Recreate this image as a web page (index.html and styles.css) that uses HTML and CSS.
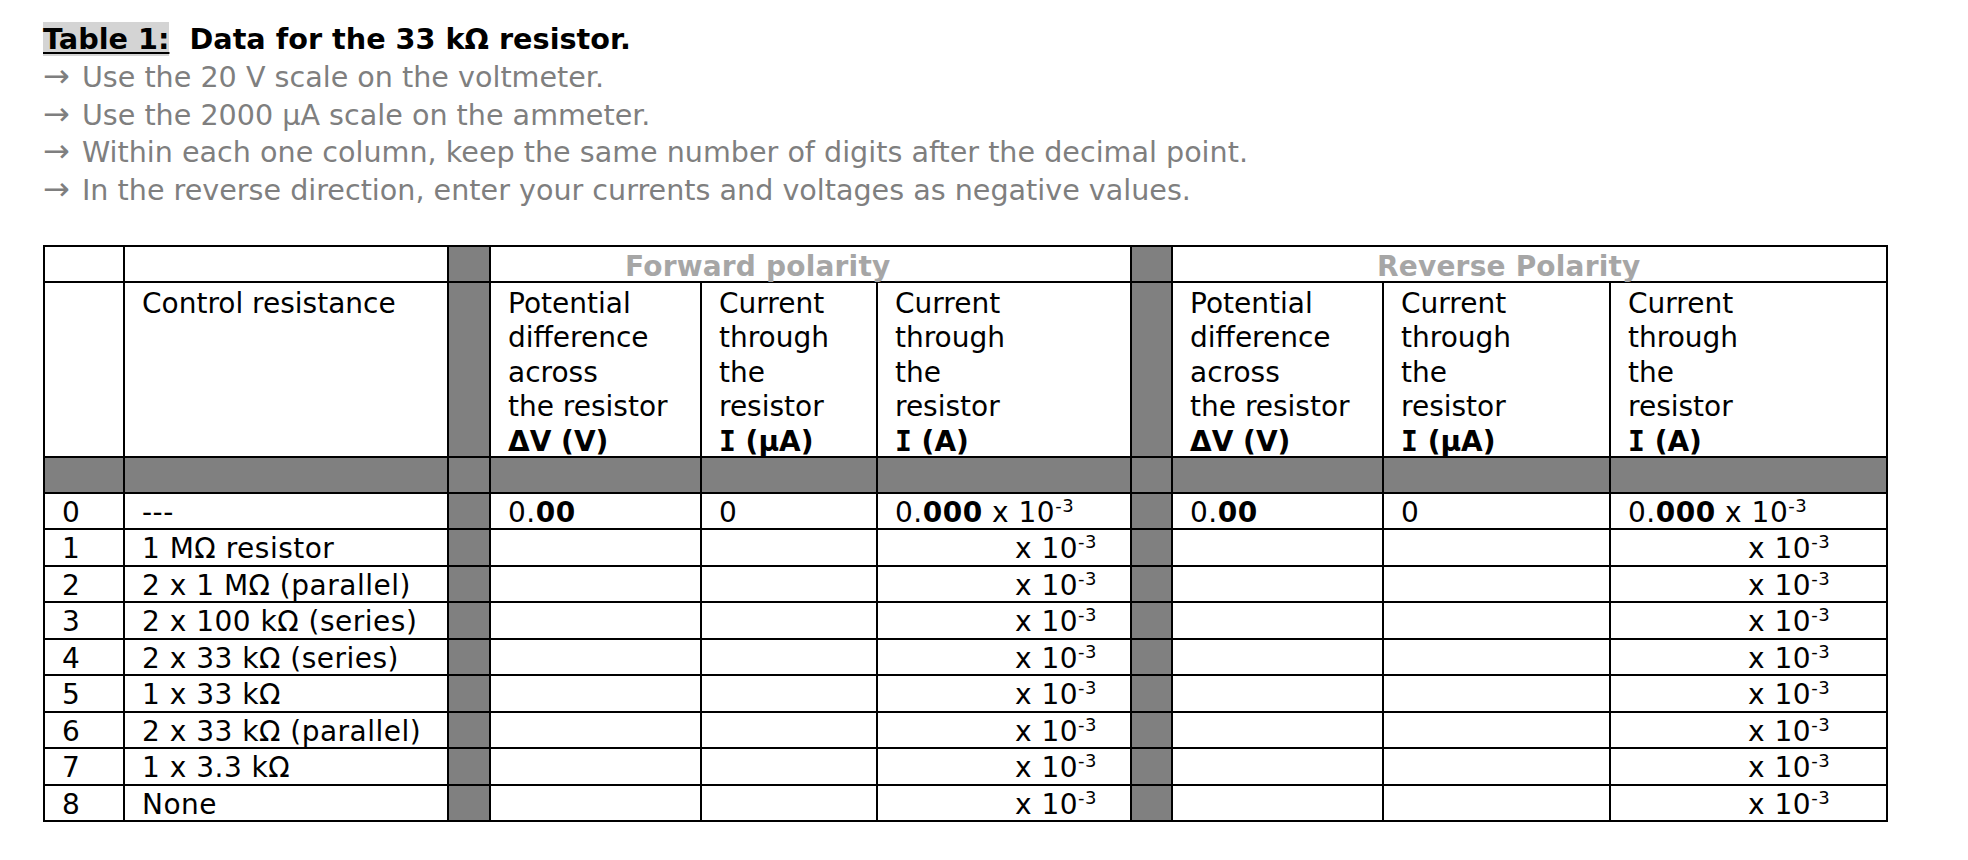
FILE: index.html
```html
<!DOCTYPE html>
<html>
<head>
<meta charset="utf-8">
<link rel="stylesheet" href="styles.css">
</head>
<body>
<div class="page">
  <div class="title"><span class="label">Table 1:</span>  Data for the 33 kΩ resistor.</div>
  <div class="notes">
    <div><span class="ar">→</span> Use the 20 V scale on the voltmeter.</div>
    <div><span class="ar">→</span> Use the 2000 µA scale on the ammeter.</div>
    <div><span class="ar">→</span> Within each one column, keep the same number of digits after the decimal point.</div>
    <div><span class="ar">→</span> In the reverse direction, enter your currents and voltages as negative values.</div>
  </div>
  <table class="data">
    <colgroup>
      <col class="c1"><col class="c2"><col class="c3"><col class="c4"><col class="c5"><col class="c6"><col class="c7"><col class="c8"><col class="c9"><col class="c10">
    </colgroup>
    <tr class="h1">
      <td></td><td></td><td class="g"></td>
      <td colspan="3" class="grp fwd">Forward polarity</td>
      <td class="g"></td>
      <td colspan="3" class="grp rev">Reverse Polarity</td>
    </tr>
    <tr class="h2">
      <td></td>
      <td><div class="hd">Control resistance</div></td>
      <td class="g"></td>
      <td><div class="hd">Potential<br>difference<br>across<br>the resistor<br><b>ΔV (V)</b></div></td>
      <td><div class="hd">Current<br>through<br>the<br>resistor<br><b><span class="si">I</span> (μA)</b></div></td>
      <td><div class="hd">Current<br>through<br>the<br>resistor<br><b><span class="si">I</span> (A)</b></div></td>
      <td class="g"></td>
      <td><div class="hd">Potential<br>difference<br>across<br>the resistor<br><b>ΔV (V)</b></div></td>
      <td><div class="hd">Current<br>through<br>the<br>resistor<br><b><span class="si">I</span> (μA)</b></div></td>
      <td><div class="hd">Current<br>through<br>the<br>resistor<br><b><span class="si">I</span> (A)</b></div></td>
    </tr>
    <tr class="gr">
      <td class="g"></td><td class="g"></td><td class="g"></td><td class="g"></td><td class="g"></td><td class="g"></td><td class="g"></td><td class="g"></td><td class="g"></td><td class="g"></td>
    </tr>
    <tr class="row">
      <td>0</td><td>---</td><td class="g"></td>
      <td>0.<b>00</b></td><td>0</td><td>0.<b>000</b> x 10<sup>-3</sup></td>
      <td class="g"></td>
      <td>0.<b>00</b></td><td>0</td><td>0.<b>000</b> x 10<sup>-3</sup></td>
    </tr>
    <tr class="row">
      <td>1</td><td>1 MΩ resistor</td><td class="g"></td>
      <td></td><td></td><td class="xp">x 10<sup>-3</sup></td>
      <td class="g"></td>
      <td></td><td></td><td class="xp">x 10<sup>-3</sup></td>
    </tr>
    <tr class="row">
      <td>2</td><td>2 x 1 MΩ (parallel)</td><td class="g"></td>
      <td></td><td></td><td class="xp">x 10<sup>-3</sup></td>
      <td class="g"></td>
      <td></td><td></td><td class="xp">x 10<sup>-3</sup></td>
    </tr>
    <tr class="row">
      <td>3</td><td>2 x 100 kΩ (series)</td><td class="g"></td>
      <td></td><td></td><td class="xp">x 10<sup>-3</sup></td>
      <td class="g"></td>
      <td></td><td></td><td class="xp">x 10<sup>-3</sup></td>
    </tr>
    <tr class="row">
      <td>4</td><td>2 x 33 kΩ (series)</td><td class="g"></td>
      <td></td><td></td><td class="xp">x 10<sup>-3</sup></td>
      <td class="g"></td>
      <td></td><td></td><td class="xp">x 10<sup>-3</sup></td>
    </tr>
    <tr class="row">
      <td>5</td><td>1 x 33 kΩ</td><td class="g"></td>
      <td></td><td></td><td class="xp">x 10<sup>-3</sup></td>
      <td class="g"></td>
      <td></td><td></td><td class="xp">x 10<sup>-3</sup></td>
    </tr>
    <tr class="row">
      <td>6</td><td>2 x 33 kΩ (parallel)</td><td class="g"></td>
      <td></td><td></td><td class="xp">x 10<sup>-3</sup></td>
      <td class="g"></td>
      <td></td><td></td><td class="xp">x 10<sup>-3</sup></td>
    </tr>
    <tr class="row">
      <td>7</td><td>1 x 3.3 kΩ</td><td class="g"></td>
      <td></td><td></td><td class="xp">x 10<sup>-3</sup></td>
      <td class="g"></td>
      <td></td><td></td><td class="xp">x 10<sup>-3</sup></td>
    </tr>
    <tr class="row">
      <td>8</td><td>None</td><td class="g"></td>
      <td></td><td></td><td class="xp">x 10<sup>-3</sup></td>
      <td class="g"></td>
      <td></td><td></td><td class="xp">x 10<sup>-3</sup></td>
    </tr>
  </table>
</div>
</body>
</html>
```

FILE: styles.css
```css
html, body {
  margin: 0;
  padding: 0;
  background: #ffffff;
}
body {
  font-family: "DejaVu Sans", Verdana, sans-serif;
  color: #000000;
}
.page {
  padding: 22px 0 0 43px;
}
.title {
  font-size: 28.7px;
  line-height: 34px;
  font-weight: bold;
  white-space: pre;
}
.label {
  background: #d4d4d4;
  text-decoration: underline;
  text-decoration-thickness: 2px;
  text-underline-offset: 3px;
}
.notes {
  margin-top: 3px;
  font-size: 28.6px;
  line-height: 37.5px;
  color: #7f7f7f;
}
.ar {
  font-size: 32px;
  line-height: 0;
  margin-right: 3px;
}
table.data {
  margin-top: 36px;
  border-collapse: collapse;
  table-layout: fixed;
  width: 1843px;
  font-size: 28px;
}
col.c1 { width: 80px; }
col.c2 { width: 324px; }
col.c3 { width: 42px; }
col.c4 { width: 211px; }
col.c5 { width: 176px; }
col.c6 { width: 254px; }
col.c7 { width: 41px; }
col.c8 { width: 211px; }
col.c9 { width: 227px; }
col.c10 { width: 277px; }
td {
  border: 2px solid #000000;
  padding: 4px 0 0 17px;
  vertical-align: top;
  line-height: 30px;
  white-space: nowrap;
}
td.g {
  background: #808080;
  padding: 0;
}
tr.h1 { height: 36px; }
tr.h1 td { padding-top: 5.5px; line-height: 28px; }
tr.h2 { height: 175px; }
tr.h2 td { padding-top: 3.5px; line-height: 34.5px; }
.hd { margin-bottom: -5px; }
tr.gr { height: 36px; }
tr.row { height: 36.44px; }
tr.row td { letter-spacing: 0.5px; }
td.grp {
  color: #a6a6a6;
  font-weight: bold;
  letter-spacing: 0.2px;
}
td.fwd { padding-left: 134px; }
td.rev { padding-left: 204px; }
td.xp { padding-left: 137px; }
.si {
  font-family: "DejaVu Sans Mono", monospace;
}
sup {
  font-size: 18px;
  line-height: 0;
  vertical-align: 10px;
}
```
